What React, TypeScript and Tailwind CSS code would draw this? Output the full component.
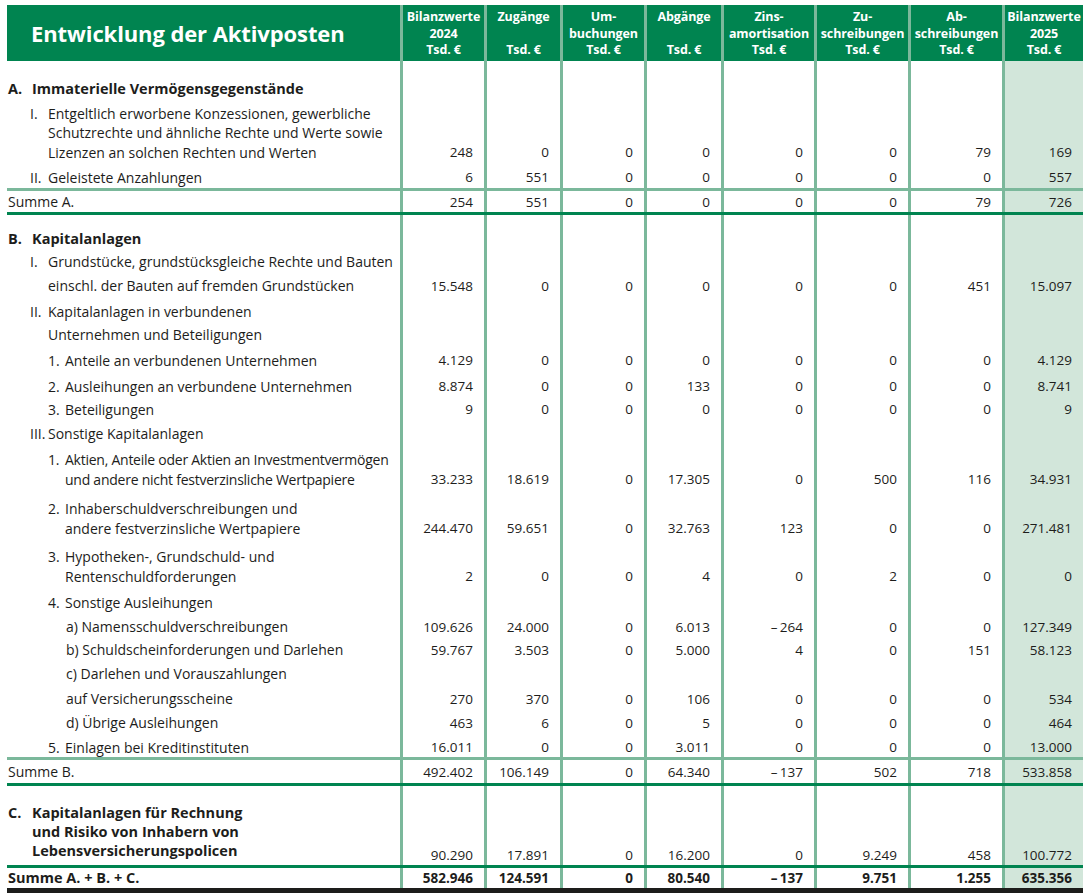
import type { ReactNode } from "react";

const cols = "grid grid-cols-[393px_84px_76px_84px_77px_93px_94px_94px_81px]";

type Row = {
  h: string;
  label: ReactNode;
  v?: string[];
  bold?: boolean;
  center?: boolean;
  pb?: string;
  lpb?: string;
};

const Sec = ({ l, children }: { l: string; children: ReactNode }) => (
  <div className="flex pl-[1px] text-[14.5px] font-bold leading-[19px]">
    <span className="w-[24px] shrink-0">{l}</span>
    <span>{children}</span>
  </div>
);

const Rom = ({ l, children }: { l: string; children: ReactNode }) => (
  <div className="flex pl-[23px] leading-[19.5px]">
    <span className="w-[18px] shrink-0">{l}</span>
    <span>{children}</span>
  </div>
);

const Num = ({ l, tight, children }: { l: string; tight?: boolean; children: ReactNode }) => (
  <div className={`flex pl-[41px] leading-[19.5px] ${tight ? "tracking-[-0.25px]" : ""}`}>
    <span className="w-[17px] shrink-0">{l}</span>
    <span>{children}</span>
  </div>
);

const Plain = ({ pl, children }: { pl: string; children: ReactNode }) => (
  <div className={`${pl} leading-[20px]`}>{children}</div>
);

const vals = (a: string, b: string, c: string, d: string, e: string, f: string, g: string, h: string) => [a, b, c, d, e, f, g, h];

const partA: Row[] = [
  { h: "h-[39px]", label: <Sec l="A.">Immaterielle Vermögensgegenstände</Sec> },
  {
    h: "h-[64px]",
    label: (
      <Rom l="I.">
        Entgeltlich erworbene Konzessionen, gewerbliche
        <br />
        Schutzrechte und ähnliche Rechte und Werte sowie
        <br />
        Lizenzen an solchen Rechten und Werten
      </Rom>
    ),
    v: vals("248", "0", "0", "0", "0", "0", "79", "169"),
  },
  { h: "h-[24px]", pb: "pb-[1px]", label: <Rom l="II.">Geleistete Anzahlungen</Rom>, v: vals("6", "551", "0", "0", "0", "0", "0", "557") },
];

const sumA: Row = { h: "h-[21px]", center: true, label: <Plain pl="pl-[1px]">Summe A.</Plain>, v: vals("254", "551", "0", "0", "0", "0", "79", "726") };

const partB: Row[] = [
  { h: "h-[35px]", label: <Sec l="B.">Kapitalanlagen</Sec> },
  { h: "h-[23px]", label: <Rom l="I.">Grundstücke, grundstücksgleiche Rechte und Bauten</Rom> },
  { h: "h-[25px]", label: <Plain pl="pl-[41px]">einschl. der Bauten auf fremden Grundstücken</Plain>, v: vals("15.548", "0", "0", "0", "0", "0", "451", "15.097") },
  { h: "h-[25px]", label: <Rom l="II.">Kapitalanlagen in verbundenen</Rom> },
  { h: "h-[24px]", label: <Plain pl="pl-[41px]">Unternehmen und Beteiligungen</Plain> },
  { h: "h-[25px]", label: <Num l="1.">Anteile an verbundenen Unternehmen</Num>, v: vals("4.129", "0", "0", "0", "0", "0", "0", "4.129") },
  { h: "h-[26px]", label: <Num l="2.">Ausleihungen an verbundene Unternehmen</Num>, v: vals("8.874", "0", "0", "133", "0", "0", "0", "8.741") },
  { h: "h-[23px]", label: <Num l="3.">Beteiligungen</Num>, v: vals("9", "0", "0", "0", "0", "0", "0", "9") },
  { h: "h-[24px]", label: <Rom l="III.">Sonstige Kapitalanlagen</Rom> },
  {
    h: "h-[46px]",
    label: (
      <Num l="1." tight>
        Aktien, Anteile oder Aktien an Investmentvermögen
        <br />
        und andere nicht festverzinsliche Wertpapiere
      </Num>
    ),
    v: vals("33.233", "18.619", "0", "17.305", "0", "500", "116", "34.931"),
  },
  {
    h: "h-[49px]",
    label: (
      <Num l="2.">
        Inhaberschuldverschreibungen und
        <br />
        andere festverzinsliche Wertpapiere
      </Num>
    ),
    v: vals("244.470", "59.651", "0", "32.763", "123", "0", "0", "271.481"),
  },
  {
    h: "h-[48px]",
    label: (
      <Num l="3.">
        Hypotheken-, Grundschuld- und
        <br />
        Rentenschuldforderungen
      </Num>
    ),
    v: vals("2", "0", "0", "4", "0", "2", "0", "0"),
  },
  { h: "h-[26px]", label: <Num l="4.">Sonstige Ausleihungen</Num> },
  { h: "h-[25px]", label: <Plain pl="pl-[59px]">a) Namensschuldverschreibungen</Plain>, v: vals("109.626", "24.000", "0", "6.013", "–\u2009264", "0", "0", "127.349") },
  { h: "h-[23px]", label: <Plain pl="pl-[59px]">b) Schuldscheinforderungen und Darlehen</Plain>, v: vals("59.767", "3.503", "0", "5.000", "4", "0", "151", "58.123") },
  { h: "h-[24px]", label: <Plain pl="pl-[59px]">c) Darlehen und Vorauszahlungen</Plain> },
  { h: "h-[25px]", label: <Plain pl="pl-[59px]">auf Versicherungsscheine</Plain>, v: vals("270", "370", "0", "106", "0", "0", "0", "534") },
  { h: "h-[24px]", label: <Plain pl="pl-[59px]">d) Übrige Ausleihungen</Plain>, v: vals("463", "6", "0", "5", "0", "0", "0", "464") },
  { h: "h-[22px]", pb: "pb-0", label: <Num l="5.">Einlagen bei Kreditinstituten</Num>, v: vals("16.011", "0", "0", "3.011", "0", "0", "0", "13.000") },
];

const sumB: Row = { h: "h-[23px]", center: true, label: <Plain pl="pl-[1px]">Summe B.</Plain>, v: vals("492.402", "106.149", "0", "64.340", "–\u2009137", "502", "718", "533.858") };

const partC: Row = {
  h: "h-[79px]",
  pb: "pb-0",
  lpb: "pb-[5px]",
  label: (
    <Sec l="C.">
      Kapitalanlagen für Rechnung
      <br />
      und Risiko von Inhabern von
      <br />
      Lebensversicherungspolicen
    </Sec>
  ),
  v: vals("90.290", "17.891", "0", "16.200", "0", "9.249", "458", "100.772"),
};

const total: Row = {
  h: "h-[20px]",
  center: true,
  bold: true,
  label: (
    <Plain pl="pl-[1px] text-[14.5px]">Summe A. + B. + C.</Plain>
  ),
  v: vals("582.946", "124.591", "0", "80.540", "–\u2009137", "9.751", "1.255", "635.356"),
};

const heads = [
  ["Bilanzwerte", "2024", "Tsd. €"],
  ["Zugänge", "\u00a0", "Tsd. €"],
  ["Um-", "buchungen", "Tsd. €"],
  ["Abgänge", "\u00a0", "Tsd. €"],
  ["Zins-", "amortisation", "Tsd. €"],
  ["Zu-", "schreibungen", "Tsd. €"],
  ["Ab-", "schreibungen", "Tsd. €"],
  ["Bilanzwerte", "2025", "Tsd. €"],
];

function TableRow({ row }: { row: Row }) {
  const align = row.center ? "items-center" : "items-end";
  const pb = row.center ? "" : row.pb ?? "pb-[2px]";
  return (
    <div className={`${cols} ${row.h} ${row.bold ? "font-bold" : ""}`}>
      <div className={`flex ${align} ${row.lpb ?? pb} whitespace-nowrap text-[14px]`}>{row.label}</div>
      {Array.from({ length: 8 }).map((_, i) => (
        <div
          key={i}
          className={`flex ${align} justify-end border-l-[3px] border-[#7bb89b] pr-[11px] text-[13.5px] leading-[20px] ${pb} ${
            i === 7 ? "bg-[#d2e6da]" : ""
          }`}
        >
          {row.v?.[i]}
        </div>
      ))}
    </div>
  );
}

const Line = ({ c }: { c: string }) => <div className={`h-[3px] ${c}`} />;

export default function App() {
  return (
    <div className="min-h-[896px] bg-white pt-[5px] pl-[7px] font-['Open_Sans','Liberation_Sans',sans-serif] text-[14px] text-[#1d1d1b]">
      <div className="w-[1076px]">
        <div className={`${cols} h-[56px] bg-[#008450] text-white`}>
          <div className="flex items-center pl-[24px] text-[22px] font-bold tracking-[-0.1px]">Entwicklung der Aktivposten</div>
          {heads.map((h, i) => (
            <div
              key={i}
              className="flex flex-col items-center border-l-[3px] border-[#7bb89b] pt-[4px] text-[12.5px] font-bold leading-[16.5px] tracking-[-0.1px]"
            >
              {h.map((t, j) => (
                <span key={j}>{t}</span>
              ))}
            </div>
          ))}
        </div>

        {partA.map((r, i) => (
          <TableRow key={i} row={r} />
        ))}
        <Line c="bg-[#7bb89b]" />
        <TableRow row={sumA} />
        <Line c="bg-[#008450]" />

        {partB.map((r, i) => (
          <TableRow key={i} row={r} />
        ))}
        <Line c="bg-[#7bb89b]" />
        <TableRow row={sumB} />
        <Line c="bg-[#008450]" />

        <TableRow row={partC} />
        <Line c="bg-[#008450]" />
        <TableRow row={total} />
        <div className="h-[5px] bg-[#1d1d1b]" />
      </div>
    </div>
  );
}
